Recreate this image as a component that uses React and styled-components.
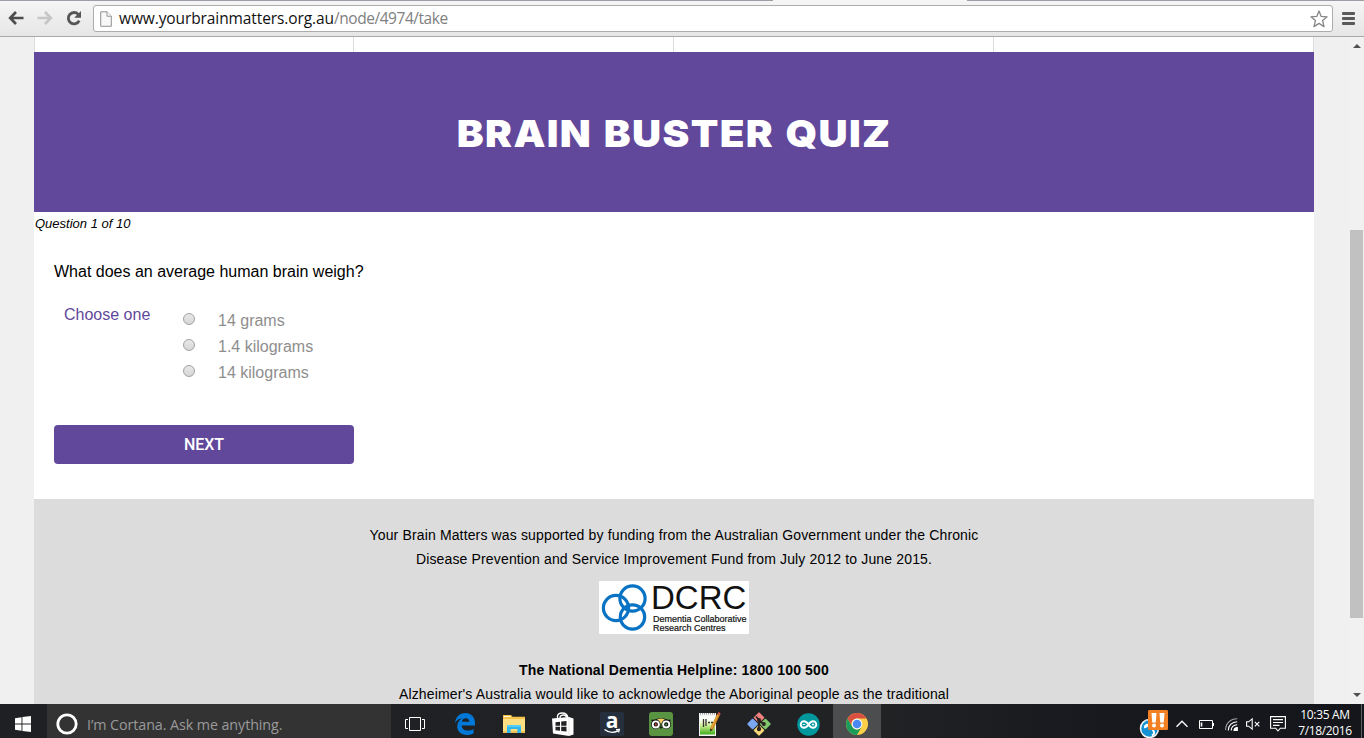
import React from "react";
import styled, { createGlobalStyle } from "styled-components";

const Global = createGlobalStyle`
  *, *::before, *::after { box-sizing: border-box; }
  html, body { margin: 0; padding: 0; overflow: hidden; }
  body { background: #f0f0f0; color: #000; font-family: "Liberation Sans", Arial, sans-serif; }
  svg { display: block; flex: none; overflow: visible; }
  p, h1 { margin: 0; }
`;

const PURPLE = "#61489b";

const Screen = styled.div`
  display: flex;
  flex-direction: column;
  width: 1364px;
  height: 738px;
  overflow: hidden;
`;

/* Browser toolbar */
const TabEdge = styled.div`
  flex: none;
  height: 1px;
  background: linear-gradient(90deg, #9d9da6 773px, #f6f5f6 773px, #f6f5f6 967px, #9d9da6 967px);
`;
const Toolbar = styled.header`
  display: flex;
  align-items: center;
  flex: none;
  height: 36px;
  padding: 0 8px;
  background: linear-gradient(#f6f5f6, #e6e6e6);
  border-bottom: 1px solid #a9a9a9;
`;
const NavIcons = styled.div`
  display: flex;
  gap: 13px;
  width: 85px;
`;
const AddressBar = styled.div`
  display: flex;
  align-items: center;
  width: 1240px;
  height: 27px;
  padding: 0 4px 0 6px;
  background: #fff;
  border: 1px solid #acacac;
  border-radius: 3px;
`;
const Url = styled.span`
  flex: 1;
  padding: 0 0 1px 7px;
  color: #808080;
  font: 15.5px/24px "Open Sans", sans-serif;
  letter-spacing: ${(p) => p.$track};
  white-space: nowrap;
`;
const Host = styled.span`
  color: #111;
  letter-spacing: -0.1px;
`;
const MenuButton = styled.div`
  display: flex;
  flex-direction: column;
  gap: 2px;
  margin-left: 9px;
`;
const MenuBar = styled.i`
  width: 13px;
  height: 3px;
  border-radius: 1px;
  background: #595959;
`;

/* Web page */
const Viewport = styled.div`
  display: flex;
  flex: none;
  height: 667px;
  padding-left: 34px;
  overflow: hidden;
  background: #f0f0f0;
`;
const Page = styled.main`
  width: 1280px;
  height: 667px;
  overflow: hidden;
  background: #fff;
`;
const MenuStrip = styled.div`
  display: grid;
  grid-template-columns: 319px 320px 320px 320px;
  height: 15px;
  border-left: 1px solid #ddd;
`;
const MenuCell = styled.div`
  border-right: 1px solid #ddd;
`;
const Banner = styled.div`
  display: flex;
  align-items: center;
  justify-content: center;
  height: 160px;
  padding-top: 4px;
  background: ${PURPLE};
`;
const Title = styled.h1`
  color: #fff;
  font: 900 37.5px/40px Inter, sans-serif;
  letter-spacing: 1.25px;
  word-spacing: 2px;
  white-space: nowrap;
  transform: scaleX(1.075);
`;
const Quiz = styled.section`
  height: 287px;
`;
const Progress = styled.p`
  padding: 3px 0 0 1px;
  font-size: 13px;
  line-height: 18px;
  font-style: italic;
`;
const Question = styled.p`
  padding: 29px 0 0 20px;
  font-size: 16px;
  line-height: 20px;
`;
const Choices = styled.div`
  display: flex;
  padding: 23px 0 0 30px;
  font-size: 16px;
`;
const ChoiceLabel = styled.div`
  width: 119px;
  color: ${PURPLE};
  line-height: 20px;
`;
const Options = styled.div`
  padding-top: 3px;
`;
const Option = styled.label`
  display: flex;
  align-items: center;
  gap: 23px;
  height: 26px;
  color: #8e8e8e;
  line-height: 26px;
`;
const Radio = styled.i`
  width: 12px;
  height: 12px;
  margin-top: -4px;
  border: 1px solid #a2a2a2;
  border-radius: 50%;
  background: linear-gradient(#e8e8e8, #d6d6d6);
`;
const NextButton = styled.button`
  display: block;
  width: 300px;
  height: 39px;
  margin: 39px 0 0 20px;
  padding: 1px 0 0;
  border: 0;
  border-radius: 4px;
  background: ${PURPLE};
  color: #fff;
  font: 500 16px/38px Roboto, sans-serif;
  letter-spacing: -0.1px;
`;
const Footer = styled.footer`
  display: flex;
  flex-direction: column;
  align-items: center;
  height: 205px;
  padding-top: 24px;
  background: #dcdcdc;
  font-size: 14px;
  line-height: 24px;
  text-align: center;
  white-space: nowrap;
`;
const FootLine = styled.p`
  font-weight: ${(p) => (p.$bold ? 700 : 400)};
  letter-spacing: 0.145px;
`;
const Partner = styled.div`
  display: flex;
  width: 150px;
  height: 53px;
  margin: 10px 0 24px;
  background: #fff;
  text-align: left;
`;
const PartnerText = styled.div`
  padding-left: 4px;
  color: #111;
`;
const PartnerName = styled.div`
  margin-left: -2px;
  font-size: 33px;
  line-height: 33px;
`;
const PartnerSub = styled.div`
  font-size: 9px;
  -webkit-text-stroke: 0.2px #111;
`;
const PartnerLine = styled.div`
  height: 9px;
  line-height: 10px;
`;
const Scrollbar = styled.div`
  display: flex;
  flex-direction: column;
  align-items: center;
  width: 15px;
  margin-left: 35px;
  padding: 7px 1px 0;
  background: #f1f1f1;
`;
const Arrow = styled.i`
  border: 4px solid transparent;
  border-top: ${(p) => (p.$down ? "4px solid #505050" : "0")};
  border-bottom: ${(p) => (p.$down ? "0" : "4px solid #505050")};
`;
const Thumb = styled.div`
  width: 13px;
  height: 388px;
  margin: 182px 0 75px;
  background: #c1c1c1;
`;

/* Windows taskbar */
const Taskbar = styled.nav`
  display: flex;
  flex: none;
  height: 34px;
  overflow: hidden;
  background: linear-gradient(90deg, #1f2023, #212224 880px, #17191e 1100px, #14161b);
`;
const Slot = styled.div`
  display: flex;
  align-items: center;
  justify-content: center;
  flex: none;
  width: ${(p) => p.$w || 49}px;
  height: 40px;
  padding-right: ${(p) => p.$nudge || 0}px;
  background: ${(p) => (p.$active ? "#4c4d4e" : "transparent")};
`;
const Cortana = styled.div`
  display: flex;
  align-items: center;
  gap: 9px;
  width: 344px;
  height: 40px;
  padding-left: 9px;
  background: #333;
  color: #9a9a9a;
  font: 14.3px/40px "Open Sans", sans-serif;
  letter-spacing: -0.08px;
`;
const CortanaHint = styled.span`
  padding-top: 2px;
`;
const Tray = styled.div`
  display: flex;
  align-items: center;
  height: 40px;
  margin-left: auto;
  padding-right: 2px;
`;
const TrayItem = styled.div`
  display: flex;
  margin-right: ${(p) => p.$gap}px;
`;
const Clock = styled.div`
  width: 60px;
  margin-right: 6px;
  padding-bottom: 3px;
  color: #fff;
  font: 12px/16px "Open Sans", sans-serif;
  letter-spacing: -0.35px;
  text-align: center;
`;
const ShowDesktop = styled.i`
  width: 1px;
  height: 40px;
  background: #5d5f63;
`;

const AmazonLetter = styled.text`
  font: 700 21px "Open Sans", sans-serif;
`;

function BackIcon({ color }) {
  return (
    <svg width="16" height="14" viewBox="0 0 16 14" fill="none" stroke={color} strokeWidth="2.7">
      <path d="M8 1L2.2 7L8 13M2.5 7H15.5" />
    </svg>
  );
}

function ReloadIcon() {
  return (
    <svg width="16" height="15" viewBox="0 0 16 15">
      <path d="M12.3 3.4A5.7 5.7 0 1 0 13.2 9.6" fill="none" stroke="#555" strokeWidth="2.8" />
      <path d="M15 0V6.8H8.2Z" fill="#555" />
    </svg>
  );
}

function PageIcon() {
  return (
    <svg width="12" height="16" viewBox="0 0 12 16" fill="#f7f7f7" stroke="#919191">
      <path d="M.7 .8H7L11.3 5V15.3H.7Z" />
      <path d="M7 .8V5.2H11.3" fill="#fff" />
    </svg>
  );
}

function StarIcon() {
  return (
    <svg width="18" height="18" viewBox="0 0 18 18" fill="#fff" stroke="#868686" strokeWidth="1.3" strokeLinejoin="round">
      <path d="M9 1L11.2 6.4L17.1 6.8L12.6 10.6L14 16.6L9 13.4L4 16.6L5.4 10.6L.9 6.8L6.8 6.4Z" />
    </svg>
  );
}

function DcrcRings() {
  return (
    <svg width="50" height="53" viewBox="0 0 50 53" fill="none" stroke="#0873c4" strokeWidth="3.2">
      <circle cx="33.5" cy="17.5" r="12.6" />
      <circle cx="17" cy="27" r="12.6" />
      <circle cx="33.5" cy="36" r="12.2" />
    </svg>
  );
}

function WindowsIcon() {
  return (
    <svg width="16" height="16" viewBox="0 0 16 16" fill="#fff">
      <path d="M0 2.2L6.5 1.3V7.5H0ZM7.4 1.1L16 0V7.5H7.4ZM0 8.4H6.5V14.7L0 13.8ZM7.4 8.4H16V16L7.4 14.9Z" />
    </svg>
  );
}

function TaskViewIcon() {
  return (
    <svg width="20" height="14" viewBox="0 0 20 14" fill="none" stroke="#fff">
      <path d="M4.5 .5H15.5V13.5H4.5ZM3 2.5H.5V11.5H3M17 2.5H19.5V11.5H17" />
    </svg>
  );
}

function EdgeIcon() {
  return (
    <svg width="20" height="22" viewBox="0 0 20 22">
      <path
        fill="#0078d7"
        d="M0 10C.7 3.7 4.8 0 10.2 0C16.2 0 20 4.2 20 10.2V12.5H6.7C6.9 16 9.4 17.6 12.7 17.6C15 17.6 17 16.9 18.6 15.9V20.2C16.8 21.3 14.5 22 11.8 22C5.8 22 2.2 18.5 2.2 13.3C2.2 9.6 4.4 6.7 7.5 5.3C4.3 5.5 1.8 7.1 0 10ZM6.9 8.8H14.3C14.2 6.4 12.9 5.2 10.8 5.2C8.7 5.2 7.3 6.5 6.9 8.8Z"
      />
    </svg>
  );
}

function FolderIcon() {
  return (
    <svg width="22" height="18" viewBox="0 0 22 18">
      <path d="M0 0H8L9.5 1.7H22V18H0Z" fill="#f5c24b" />
      <path d="M1 1H7L8 2H1Z" fill="#fff6d2" />
      <path d="M0 4H22V18H0Z" fill="#fddf83" />
      <path d="M0 16H22V18H0Z" fill="#eebf55" />
      <path d="M4 10H18V18H14.3V14H7.7V18H4Z" fill="#2fb7ee" />
      <path d="M4 10H18V12H4Z" fill="#56cdf8" />
    </svg>
  );
}

function StoreIcon() {
  return (
    <svg width="22" height="24" viewBox="0 0 22 24">
      <path d="M5.5 7V4Q6 1 10 1Q15.5 1 16 6M8 6Q8 3 11.5 3Q14 3 14.5 5.5" fill="none" stroke="#fff" strokeWidth="1.3" />
      <path d="M0 6.5L17 5L21.5 6.5V22.5L17 24L1 21.5Z" fill="#fff" />
      <path d="M3.5 10.2L8 9.7V13.7H3.5ZM9.2 9.5L14.5 9V13.7H9.2ZM3.5 14.8H8V18.8L3.5 18.2ZM9.2 14.8H14.5V19.6L9.2 19Z" fill="#202124" />
      <path d="M17 5V24" stroke="#ddd" strokeWidth=".7" />
    </svg>
  );
}

function AmazonIcon() {
  return (
    <svg width="24" height="24" viewBox="0 0 24 24">
      <rect width="24" height="24" rx="1.5" fill="#252f3d" />
      <AmazonLetter x="12" y="16" textAnchor="middle" fill="#fff">a</AmazonLetter>
      <path d="M4.5 17.5Q11 22.5 18 18.8M16 17.6L19.3 17.5L18.5 20.4" fill="none" stroke="#fff" strokeWidth="1.4" />
    </svg>
  );
}

function OwlIcon() {
  return (
    <svg width="24" height="24" viewBox="0 0 24 24">
      <rect width="24" height="24" rx="3" fill="#589442" />
      <path d="M2 7.8H6Q12 4.3 18 7.8H22L20.5 10H3.5Z" fill="#111" />
      <path d="M8 7.5Q12 5.5 16 7.5L12 12Z" fill="#f7cf68" />
      {[6.8, 17.2].map((x) => (
        <g key={x}>
          <circle cx={x} cy="12.4" r="4.8" fill="#111" />
          <circle cx={x} cy="12.4" r="4" fill="#fff" />
          <circle cx={x} cy="12.4" r="2.1" fill="#111" />
          <circle cx={x} cy="12.4" r="1" fill={x < 10 ? "#e0513d" : "#4aa445"} />
        </g>
      ))}
      <path d="M10.5 14.5H13.5L12 17.2Z" fill="#111" />
    </svg>
  );
}

function NotepadIcon() {
  return (
    <svg width="24" height="24" viewBox="0 0 24 24">
      <defs>
        <linearGradient id="note" x2="0" y2="1">
          <stop offset=".2" stopColor="#fdfff8" />
          <stop offset=".5" stopColor="#d0f095" />
          <stop offset="1" stopColor="#3fae1c" />
        </linearGradient>
      </defs>
      <path d="M2 1H19V24H2Z" fill="#f4f4f4" />
      <path d="M3 4H18V22.5H3Z" fill="url(#note)" />
      <path d="M3 1.8H19" stroke="#999" strokeWidth="1.6" strokeDasharray="1 1" />
      <path d="M6.5 7V15M9 7V14M11 10.5H13M14 10.5H16" stroke="#333" strokeWidth="1.3" />
      <path d="M21.5 2.5L14.5 17" stroke="#cc8421" strokeWidth="3" />
      <path d="M20.8 3L14.3 16.5" stroke="#f2b541" strokeWidth="1" />
      <path d="M20.3 1.5L22 0L23.5 1.5L22.9 3.5Z" fill="#d65a43" />
      <path d="M13 16.5L13.2 19.5L15.8 17.7Z" fill="#3b2b18" />
    </svg>
  );
}

function GitIcon() {
  return (
    <svg width="24" height="24" viewBox="0 0 24 24">
      <g transform="rotate(45 12 12)">
        <rect x="3.5" y="3.5" width="8" height="8" rx="1" fill="#f08080" />
        <rect x="12.5" y="3.5" width="8" height="8" rx="1" fill="#80c66a" />
        <rect x="3.5" y="12.5" width="8" height="8" rx="1" fill="#7ba8f0" />
        <rect x="12.5" y="12.5" width="8" height="8" rx="1" fill="#f6d878" />
      </g>
      <path d="M9 4.5L12 8V17M12 8.5L16.5 12" fill="none" stroke="#2c2222" strokeWidth="1.8" />
      <circle cx="12" cy="8" r="2" fill="#2c2222" />
      <circle cx="12" cy="17" r="2.2" fill="#2c2222" />
      <circle cx="16.8" cy="12" r="2" fill="#2c2222" />
    </svg>
  );
}

function ArduinoIcon() {
  return (
    <svg width="23" height="23" viewBox="0 0 23 23">
      <circle cx="11.5" cy="11.5" r="11.2" fill="#00979d" />
      <path
        d="M11.5 11.5C9.7 8.8 8.6 8.2 7 8.2A3.3 3.3 0 0 0 7 14.8C8.6 14.8 9.7 14.2 11.5 11.5C13.3 8.8 14.4 8.2 16 8.2A3.3 3.3 0 0 1 16 14.8C14.4 14.8 13.3 14.2 11.5 11.5Z"
        fill="none"
        stroke="#fff"
        strokeWidth="1.9"
      />
      <path d="M5.7 11.5H8.2M14.8 11.5H17.3M16.05 10.3V12.7" stroke="#fff" strokeWidth=".9" />
    </svg>
  );
}

function ChromeIcon() {
  return (
    <svg width="22" height="22" viewBox="0 0 22 22">
      <circle cx="11" cy="11" r="11" fill="#fdce48" />
      <path d="M1.5 5.5A11 11 0 0 1 20.5 5.5H11A5.5 5.5 0 0 0 6.2 13.8Z" fill="#da4f40" />
      <path d="M1.5 5.5A11 11 0 0 0 10.9 22L15.8 13.7A5.5 5.5 0 0 1 6.2 13.7Z" fill="#1c9c5b" />
      <circle cx="11" cy="11" r="5.4" fill="#f6f6f6" />
      <circle cx="11" cy="11" r="4.3" fill="#4a89f3" />
    </svg>
  );
}

function UpdateIcon() {
  return (
    <svg width="28" height="28" viewBox="0 0 28 28">
      <circle cx="9.5" cy="18.5" r="9" fill="#1592d3" stroke="#f4f4f4" strokeWidth="1.5" />
      <path d="M4 16Q7 12 9 15Q7 19 4 18Z" fill="#fff" />
      <path d="M12.5 20Q16 23 12 25.5" fill="none" stroke="#fff" strokeWidth="2" />
      <rect x="8" y="0" width="20" height="20" rx="1.2" fill="#f48024" />
      <path d="M11.5 3H16.5L15.8 12.5H12.2ZM19.5 3H24.5L23.8 12.5H20.2Z" fill="#fff" />
      <circle cx="14" cy="15.5" r="2" fill="#fff" />
      <circle cx="22" cy="15.5" r="2" fill="#fff" />
    </svg>
  );
}

function ChevronIcon() {
  return (
    <svg width="12" height="8" viewBox="0 0 12 8" fill="none" stroke="#fff" strokeWidth="1.3">
      <path d="M.5 6.8L6 1.2L11.5 6.8" />
    </svg>
  );
}

function BatteryIcon() {
  return (
    <svg width="15" height="9" viewBox="0 0 15 9" fill="none" stroke="#fff">
      <path d="M.5 .5H13.5V8.5H.5ZM14.5 3V6" />
      <path d="M2.5 2.5V6.5" strokeWidth="1.6" />
    </svg>
  );
}

function WifiIcon() {
  return (
    <svg width="13" height="13" viewBox="0 0 13 13" fill="none" stroke="#fff" strokeWidth="1.1">
      <path d="M.6 12C.6 5.5 5.5 .8 12.2 .8" stroke="#a4a6a9" />
      <path d="M3.3 12.4C3.4 7.4 7 3.8 12.2 3.7M6.2 12.5C6.3 9 8.6 6.8 12.2 6.7" />
      <path d="M9 12.5C9 10.7 10.2 9.6 12.3 9.5V12.5Z" fill="#fff" />
    </svg>
  );
}

function SpeakerIcon() {
  return (
    <svg width="14" height="12" viewBox="0 0 14 12" fill="none" stroke="#fff" strokeWidth="1.1">
      <path d="M.6 3.8H2.6L6.2 .8V11.2L2.6 8.2H.6Z" />
      <path d="M8.8 3.8L13.3 8.3M13.3 3.8L8.8 8.3" />
    </svg>
  );
}

function ActionIcon() {
  return (
    <svg width="16" height="16" viewBox="0 0 16 16" fill="none" stroke="#fff" strokeWidth="1.1">
      <path d="M.6 .6H15.4V12.2H10.3L8 15L5.7 12.2H.6Z" />
      <path d="M3 3.6H13M3 6.5H13M3 9.4H9.5" />
    </svg>
  );
}

const OPTIONS = ["14 grams", "1.4 kilograms", "14 kilograms"];
const APPS = [
  [TaskViewIcon, 2],
  [EdgeIcon],
  [FolderIcon],
  [StoreIcon],
  [AmazonIcon],
  [OwlIcon],
  [NotepadIcon, 1],
  [GitIcon],
  [ArduinoIcon],
];
const TRAY = [
  [UpdateIcon, 8],
  [ChevronIcon, 11],
  [BatteryIcon, 11],
  [WifiIcon, 8],
  [SpeakerIcon, 10],
  [ActionIcon, 9],
];

const Flip = styled.div`
  transform: scaleX(-1);
`;

export default function App() {
  return (
    <Screen>
      <Global />
      <TabEdge />
      <Toolbar>
        <NavIcons>
          <BackIcon color="#4d4d4d" />
          <Flip><BackIcon color="#c6c6c6" /></Flip>
          <ReloadIcon />
        </NavIcons>
        <AddressBar>
          <PageIcon />
          <Url $track="-0.45px"><Host>www.yourbrainmatters.org.au</Host>/node/4974/take</Url>
          <StarIcon />
        </AddressBar>
        <MenuButton><MenuBar /><MenuBar /><MenuBar /></MenuButton>
      </Toolbar>

      <Viewport>
        <Page>
          <MenuStrip><MenuCell /><MenuCell /><MenuCell /><MenuCell /></MenuStrip>
          <Banner><Title>BRAIN BUSTER QUIZ</Title></Banner>
          <Quiz>
            <Progress>Question 1 of 10</Progress>
            <Question>What does an average human brain weigh?</Question>
            <Choices>
              <ChoiceLabel>Choose one</ChoiceLabel>
              <Options>
                {OPTIONS.map((o) => (
                  <Option key={o}><Radio />{o}</Option>
                ))}
              </Options>
            </Choices>
            <NextButton>NEXT</NextButton>
          </Quiz>
          <Footer>
            <FootLine>Your Brain Matters was supported by funding from the Australian Government under the Chronic</FootLine>
            <FootLine>Disease Prevention and Service Improvement Fund from July 2012 to June 2015.</FootLine>
            <Partner>
              <DcrcRings />
              <PartnerText>
                <PartnerName>DCRC</PartnerName>
                <PartnerSub>
                  <PartnerLine>Dementia Collaborative</PartnerLine>
                  <PartnerLine>Research Centres</PartnerLine>
                </PartnerSub>
              </PartnerText>
            </Partner>
            <FootLine $bold>The National Dementia Helpline: 1800 100 500</FootLine>
            <FootLine>Alzheimer's Australia would like to acknowledge the Aboriginal people as the traditional</FootLine>
          </Footer>
        </Page>
        <Scrollbar>
          <Arrow />
          <Thumb />
          <Arrow $down />
        </Scrollbar>
      </Viewport>

      <Taskbar>
        <Slot $w={47} $nudge={1}><WindowsIcon /></Slot>
        <Cortana>
          <svg width="22" height="22" viewBox="0 0 22 22">
            <circle cx="11" cy="11" r="9.2" fill="none" stroke="#fff" strokeWidth="2.8" />
          </svg>
          <CortanaHint>I’m Cortana. Ask me anything.</CortanaHint>
        </Cortana>
        {APPS.map(([Icon, nudge], i) => (
          <Slot key={i} $nudge={nudge} $w={i === 8 ? 50 : 49}><Icon /></Slot>
        ))}
        <Slot $active $w={48}><ChromeIcon /></Slot>
        <Tray>
          {TRAY.map(([Icon, gap], i) => (
            <TrayItem key={i} $gap={gap}><Icon /></TrayItem>
          ))}
          <Clock>10:35 AM<br />7/18/2016</Clock>
          <ShowDesktop />
        </Tray>
      </Taskbar>
    </Screen>
  );
}
